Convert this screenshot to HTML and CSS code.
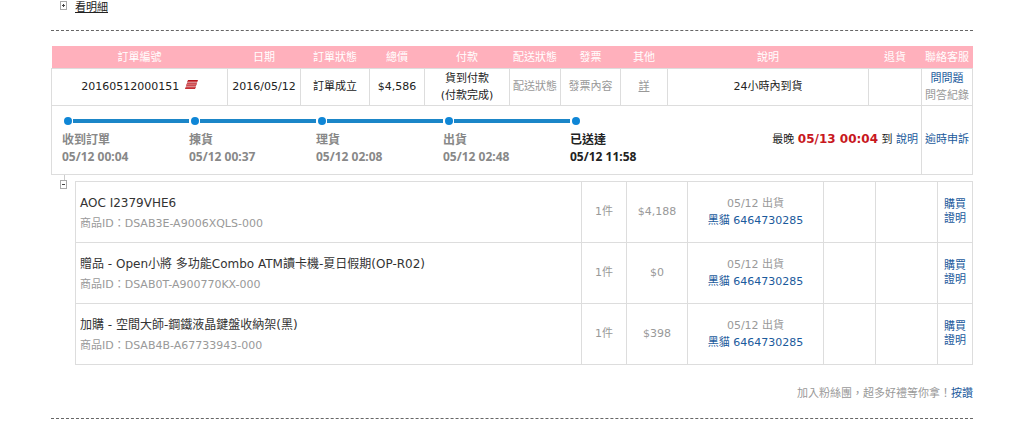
FILE: index.html
```
<!DOCTYPE html>
<html lang="zh-TW">
  <head>
    <meta charset="utf-8" />
    <meta name="viewport" content="width=device-width, initial-scale=1.0" />
    <title>訂單查詢</title>
    <link rel="stylesheet" href="styles.css">
  </head>

  <body>
    <div class="orders">
      <div class="collapsed">
        <button class="toggle plus" type="button" aria-label="展開"></button>
        <a class="view-detail" href="#">看明細</a>
      </div>

      <table class="order">
        <colgroup>
          <col class="w-no" />
          <col class="w-date" />
          <col class="w-state" />
          <col class="w-total" />
          <col class="w-pay" />
          <col class="w-ship" />
          <col class="w-invoice" />
          <col class="w-other" />
          <col />
          <col class="w-return" />
          <col class="w-service" />
        </colgroup>
        <thead>
          <tr>
            <th>訂單編號</th>
            <th>日期</th>
            <th>訂單狀態</th>
            <th>總價</th>
            <th>付款</th>
            <th>配送狀態</th>
            <th>發票</th>
            <th>其他</th>
            <th>說明</th>
            <th>退貨</th>
            <th>聯絡客服</th>
          </tr>
        </thead>
        <tbody>
          <tr class="summary">
            <td>
              20160512000151
              <svg class="express" viewBox="0 0 13 9" width="13" height="9" aria-hidden="true">
                <path d="M3 0h10l-1 2.4H2z" fill="#b3141c" />
                <path d="M3 1h9l-.3.6H2.7z" fill="#f08080" />
                <path d="M2 3.3h10l-1 2.4H1z" fill="#b3141c" />
                <path d="M2 4.3h9l-.3.6H1.7z" fill="#f08080" />
                <path d="M1 6.6h10l-1 2.4H0z" fill="#b3141c" />
                <path d="M1 7.6h9l-.3.6H.7z" fill="#f08080" />
              </svg>
            </td>
            <td>2016/05/12</td>
            <td>訂單成立</td>
            <td>$4,586</td>
            <td>貨到付款<br />(付款完成)</td>
            <td class="muted">配送狀態</td>
            <td class="muted">發票內容</td>
            <td><a class="more" href="#">詳</a></td>
            <td>24小時內到貨</td>
            <td></td>
            <td class="muted"><a href="#">問問題</a><br />問答紀錄</td>
          </tr>
          <tr class="progress">
            <td colspan="10">
              <div class="progress-row">
                <ol class="steps">
                  <li>收到訂單<br />05/12 00:04</li>
                  <li>揀貨<br />05/12 00:37</li>
                  <li>理貨<br />05/12 02:08</li>
                  <li>出貨<br />05/12 02:48</li>
                  <li class="current">已送達<br />05/12 11:58</li>
                </ol>
                <p class="deadline">最晚 <strong>05/13 00:04</strong> 到 <a href="#">說明</a></p>
              </div>
            </td>
            <td><a href="#">逾時申訴</a></td>
          </tr>
        </tbody>
      </table>

      <div class="detail">
        <div class="tree">
          <button class="toggle" type="button" aria-label="收合"></button>
        </div>
        <table class="items">
          <colgroup>
            <col />
            <col class="w-qty" />
            <col class="w-price" />
            <col class="w-parcel" />
            <col class="w-blank" />
            <col class="w-blank-wide" />
            <col class="w-proof" />
          </colgroup>
          <tbody>
            <tr>
              <td class="product">
                <p class="name">AOC I2379VHE6</p>
                <p>商品ID：DSAB3E-A9006XQLS-000</p>
              </td>
              <td>1件</td>
              <td>$4,188</td>
              <td>05/12 出貨<br /><a href="#">黑貓 6464730285</a></td>
              <td></td>
              <td></td>
              <td class="proof"><a href="#">購買<br />證明</a></td>
            </tr>
            <tr>
              <td class="product">
                <p class="name">贈品 - Open小將 多功能Combo ATM讀卡機-夏日假期(OP-R02)</p>
                <p>商品ID：DSAB0T-A900770KX-000</p>
              </td>
              <td>1件</td>
              <td>$0</td>
              <td>05/12 出貨<br /><a href="#">黑貓 6464730285</a></td>
              <td></td>
              <td></td>
              <td class="proof"><a href="#">購買<br />證明</a></td>
            </tr>
            <tr>
              <td class="product">
                <p class="name">加購 - 空間大師-鋼鐵液晶鍵盤收納架(黑)</p>
                <p>商品ID：DSAB4B-A67733943-000</p>
              </td>
              <td>1件</td>
              <td>$398</td>
              <td>05/12 出貨<br /><a href="#">黑貓 6464730285</a></td>
              <td></td>
              <td></td>
              <td class="proof"><a href="#">購買<br />證明</a></td>
            </tr>
          </tbody>
        </table>
      </div>

      <p class="fans">加入粉絲團，超多好禮等你拿！<a href="#">按讚</a></p>
    </div>
  </body>
</html>
```
FILE: styles.css
```
* {
  padding: 0;
  margin: 0;
  box-sizing: border-box;
}

body {
  background-color: #ffffff;
  color: #222222;
  font-family: "DejaVu Sans", "Noto Sans CJK TC", sans-serif;
  font-size: 11px;
  line-height: 17px;
}

a {
  color: #1a5a9c;
  text-decoration: none;
}

.orders {
  margin: 0 51px;
  border-bottom: 1px dashed #666666;
}

/* Collapsed order above */
.collapsed {
  display: flex;
  align-items: flex-start;
  gap: 8px;
  height: 31px;
  padding-left: 9px;
  margin-bottom: 15px;
  border-bottom: 1px dashed #666666;
  line-height: 15px;
}

.view-detail {
  color: #222222;
  text-decoration: underline;
}

/* Little +/- tree box */
.toggle {
  position: relative;
  display: block;
  width: 7px;
  height: 9px;
  border: 1px solid #aaaaaa;
  background-color: #ffffff;
  cursor: pointer;
}

.toggle.plus {
  margin-top: 1px;
}

.toggle:before,
.toggle.plus:after {
  content: "";
  position: absolute;
  background-color: #444444;
}

.toggle:before {
  left: 1px;
  top: 3px;
  width: 3px;
  height: 1px;
}

.toggle.plus:after {
  left: 2px;
  top: 2px;
  width: 1px;
  height: 3px;
}

table {
  width: 100%;
  table-layout: fixed;
  border-collapse: collapse;
}

td {
  border: 1px solid #dddddd;
  text-align: center;
  vertical-align: middle;
  white-space: nowrap;
}

th {
  height: 22px;
  padding-top: 2px;
  background-color: #ffb0bc;
  color: #ffffff;
  font-weight: normal;
  white-space: nowrap;
}

.w-no { width: 176px; }
.w-date { width: 73px; }
.w-state { width: 69px; }
.w-total { width: 55px; }
.w-pay { width: 85px; }
.w-ship { width: 51px; }
.w-invoice { width: 60px; }
.w-other { width: 47px; }
.w-return { width: 53px; }
.w-service { width: 51px; }

.summary td {
  height: 37px;
}

.muted,
.more {
  color: #999999;
}

.more {
  text-decoration: underline;
}

.express {
  margin-left: 2px;
  vertical-align: 1px;
}

/* Delivery progress */
.progress td {
  height: 69px;
}

.progress-row {
  display: flex;
  justify-content: space-between;
  padding: 0 3px 0 10px;
}

.steps {
  display: flex;
  list-style: none;
  color: #888888;
  font-family: "Noto Sans", "Noto Sans CJK TC", sans-serif;
  font-size: 12px;
  font-weight: bold;
  text-align: left;
}

.steps li {
  position: relative;
  width: 127px;
  padding-top: 17px;
}

.steps li:before {
  content: "";
  position: absolute;
  left: 2px;
  top: 3px;
  width: 8px;
  height: 8px;
  border-radius: 50%;
  background-color: #0f86d6;
}

.steps li:not(:last-child):after {
  content: "";
  position: absolute;
  left: 11px;
  right: 0;
  top: 5px;
  height: 4px;
  background-color: #1b86c8;
}

.steps .current {
  color: #222222;
}

.deadline {
  padding-top: 17px;
}

.deadline strong {
  color: #c8181e;
  font-size: 12px;
}

/* Items of the order */
.detail {
  display: flex;
  align-items: flex-start;
}

.tree {
  flex: 0 0 24px;
  padding-left: 9px;
}

.tree:before {
  content: "";
  display: block;
  width: 4px;
  height: 5px;
  border-right: 1px solid #cccccc;
}

.items {
  flex: 1;
  margin-top: 6px;
  color: #999999;
}

.w-qty { width: 45px; }
.w-price { width: 61px; }
.w-parcel { width: 136px; }
.w-blank { width: 52px; }
.w-blank-wide { width: 62px; }
.w-proof { width: 35px; }

.items td {
  height: 61px;
}

.items .product {
  padding: 4px 4px 0;
  text-align: left;
}

.name {
  margin-bottom: 3px;
  color: #333333;
  font-size: 12px;
}

.items .proof {
  line-height: 14px;
}

.fans {
  padding: 20px 0 16px;
  color: #999999;
  text-align: right;
}
```
